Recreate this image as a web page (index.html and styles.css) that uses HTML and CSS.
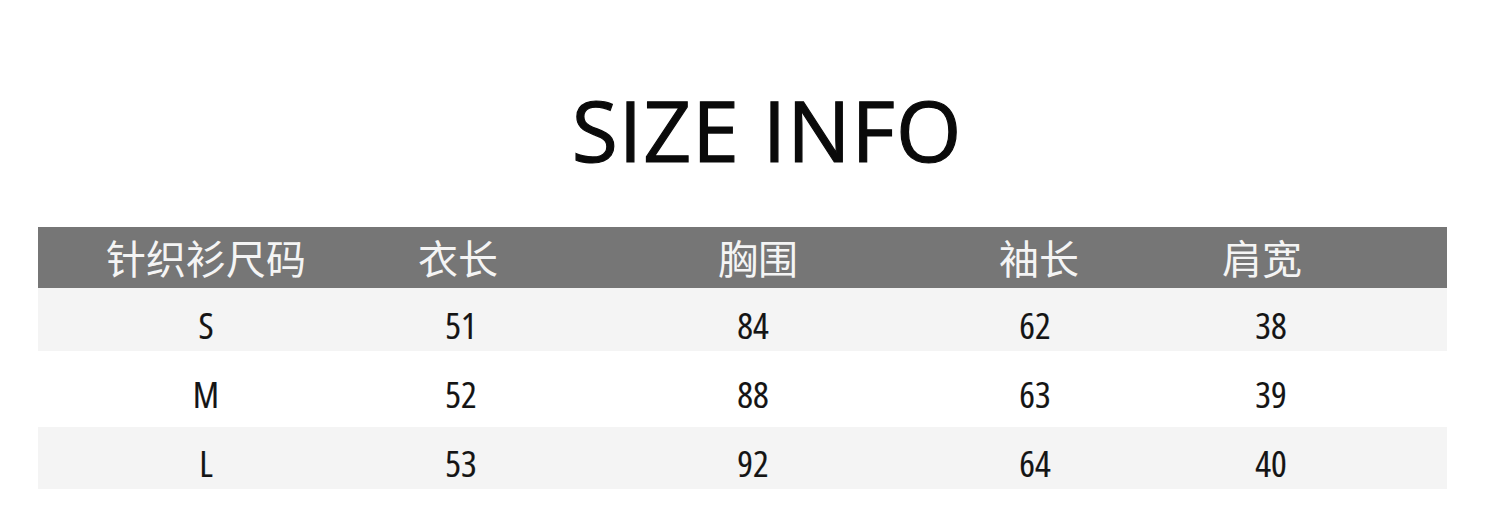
FILE: index.html
```html
<!DOCTYPE html>
<html lang="zh">
<head>
<meta charset="utf-8">
<link rel="stylesheet" href="styles.css">
</head>
<body>
<div class="page">
  <h1 class="title">SIZE INFO</h1>
  <div class="table">
    <div class="row head">
      <div class="cell">针织衫尺码</div>
      <div class="cell">衣长</div>
      <div class="cell">胸围</div>
      <div class="cell">袖长</div>
      <div class="cell">肩宽</div>
    </div>
    <div class="row body shade r1">
      <div class="cell">S</div>
      <div class="cell">51</div>
      <div class="cell">84</div>
      <div class="cell">62</div>
      <div class="cell">38</div>
    </div>
    <div class="row body r2">
      <div class="cell">M</div>
      <div class="cell">52</div>
      <div class="cell">88</div>
      <div class="cell">63</div>
      <div class="cell">39</div>
    </div>
    <div class="row body shade r3">
      <div class="cell">L</div>
      <div class="cell">53</div>
      <div class="cell">92</div>
      <div class="cell">64</div>
      <div class="cell">40</div>
    </div>
  </div>
</div>
</body>
</html>
```
FILE: styles.css
```css
html, body {
  margin: 0;
  padding: 0;
  background: #ffffff;
}
.page {
  width: 1500px;
  height: 505px;
  padding-top: 80px;
  box-sizing: border-box;
  font-family: "Open Sans", "Noto Sans CJK SC", sans-serif;
}
.title {
  margin: 0;
  height: 147px;
  text-align: center;
  font-weight: 500;
  font-size: 84px;
  line-height: 100px;
  color: #0a0a0a;
  letter-spacing: 1px;
  padding-left: 34px;
  -webkit-text-stroke: 1.2px #0a0a0a;
}
.table {
  margin-left: 38px;
  width: 1409px;
}
.row {
  display: grid;
  align-items: center;
}
.cell {
  display: flex;
  justify-content: center;
  white-space: nowrap;
}
.head {
  grid-template-columns: 336px 168px 432px 130px 316px 1fr;
  background: #767676;
  height: 61px;
  color: #f4f4f4;
  font-family: "Noto Sans CJK SC", sans-serif;
  font-size: 40px;
  line-height: 61px;
}
.body {
  grid-template-columns: 336px 174px 410px 154px 318px 1fr;
  font-size: 37px;
  font-stretch: 80%;
  color: #141414;
  -webkit-text-stroke: 0.15px #141414;
}
.body .cell {
  padding-top: 9px;
}
.shade {
  background: #f4f4f4;
}
.r1 { height: 63px; }
.r2 { height: 76px; }
.r3 { height: 62px; }
```
